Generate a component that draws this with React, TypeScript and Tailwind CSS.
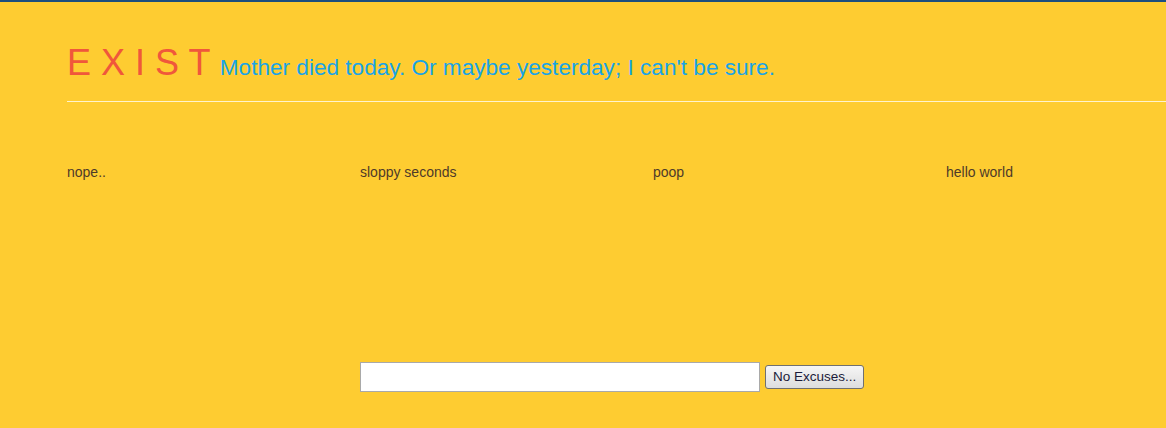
const columns = ['nope..', 'sloppy seconds', 'poop', 'hello world'];

export default function App() {
  return (
    <div className="min-h-[428px] w-full overflow-hidden border-t-2 border-[#1d4e7e] bg-[#fecc31] font-['Liberation_Sans',Arial,sans-serif]">
      <div className="ml-[67px] pt-[40px]">
        {/* header */}
        <div className="border-b border-[#fff3cc] pb-[13px]">
          <h1 className="whitespace-nowrap text-[36px] leading-[41px] font-normal text-[#f0573b]">
            E X I S T{' '}
            <span className="text-[22.6px] text-[#19a4e6]">Mother died today. Or maybe yesterday; I can't be sure.</span>
          </h1>
        </div>

        {/* columns */}
        <div className="mt-[62px] flex">
          {columns.map((label) => (
            <div key={label} className="w-[293px] shrink-0 text-[14px] leading-[16px] text-[#4e3a29]">
              {label}
            </div>
          ))}
        </div>

        {/* form */}
        <div className="ml-[293px] mt-[182px] flex items-center gap-[5px]">
          <input
            type="text"
            className="h-[30px] w-[400px] border border-[#a9a9a9] bg-white px-1 text-[14px] outline-none"
          />
          <button className="h-[24px] rounded-[3px] border border-[#707070] bg-gradient-to-b from-[#f6f6f6] to-[#dddddd] px-[7px] text-[13.5px] leading-[22px] text-[#1b1b3a]">
            No Excuses...
          </button>
        </div>
      </div>
    </div>
  );
}
